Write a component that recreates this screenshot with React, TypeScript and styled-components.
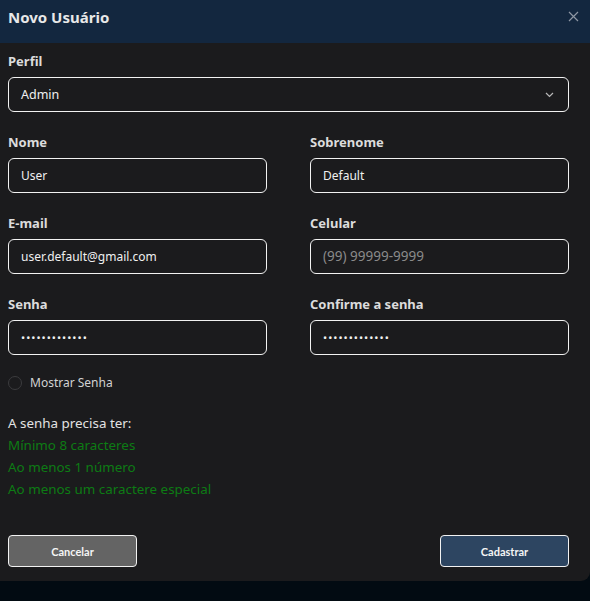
import styled, { createGlobalStyle } from 'styled-components';

const GlobalStyle = createGlobalStyle`
  * {
    box-sizing: border-box;
  }

  html, body {
    margin: 0;
    padding: 0;
    background: #020b12;
  }

  body {
    font-family: "Noto Sans", "Open Sans", sans-serif;
    color: #e6e6e6;
  }
`;

const Page = styled.div`
  width: 590px;
  height: 601px;
  overflow: hidden;
  background: #020b12;
`;

const Modal = styled.div`
  width: 590px;
  height: 581px;
  display: flex;
  flex-direction: column;
  background: #1b1b1d;
  border-bottom-right-radius: 9px;
  overflow: hidden;
`;

const Header = styled.header`
  height: 43px;
  display: flex;
  align-items: center;
  justify-content: space-between;
  padding: 0 10px 10px 8px;
  background: #13273f;
`;

const Title = styled.h2`
  margin: 0;
  font-size: 15px;
  font-weight: 700;
  color: #e8e8e8;
`;

const CloseButton = styled.button`
  display: flex;
  align-items: center;
  justify-content: center;
  width: 14px;
  height: 14px;
  padding: 0;
  border: none;
  background: transparent;
  color: #8d96a3;
  cursor: pointer;
`;

const Body = styled.div`
  flex: 1;
  display: flex;
  flex-direction: column;
  padding: 10px 21px 14px 8px;
`;

const Grid = styled.div`
  display: grid;
  grid-template-columns: 259px 259px;
  column-gap: 43px;
  row-gap: 22px;
`;

const Field = styled.div<{ $full?: boolean }>`
  display: flex;
  flex-direction: column;
  gap: 8px;
  grid-column: ${({ $full }) => ($full ? '1 / -1' : 'auto')};
`;

const Label = styled.label`
  font-size: 13px;
  font-weight: 700;
  line-height: 16px;
  color: #dcdcdc;
`;

const InputBox = styled.div`
  height: 35px;
  display: flex;
  align-items: center;
  padding: 0 12px;
  border: 1px solid #f2f2f2;
  border-radius: 6px;
  background: #1b1b1d;
`;

const Input = styled.input`
  flex: 1;
  min-width: 0;
  padding: 0;
  border: none;
  outline: none;
  background: transparent;
  font-family: inherit;
  font-size: 12px;
  color: #f0f0f0;

  &::placeholder {
    font-size: 13.5px;
    color: #8a8a8a;
  }

  &[type='password'] {
    font-size: 11px;
    letter-spacing: 1px;
  }
`;

const SelectValue = styled.span`
  flex: 1;
  font-size: 12.5px;
  color: #f0f0f0;
`;

const Chevron = styled.span`
  display: flex;
  color: #b8b8b8;
  margin-right: 2px;
`;

const CheckRow = styled.label`
  display: flex;
  align-items: center;
  gap: 8px;
  margin-top: 19px;
  font-size: 12px;
  line-height: 18px;
  color: #d2d2d2;
`;

const RoundCheck = styled.span`
  width: 14px;
  height: 14px;
  border-radius: 50%;
  border: 1px solid #3b3b3e;
`;

const Rules = styled.div`
  display: flex;
  flex-direction: column;
  margin-top: 20px;
  font-size: 13.4px;
  line-height: 22px;
`;

const RulesTitle = styled.span`
  color: #e2e2e2;
`;

const Rule = styled.span<{ $ok: boolean }>`
  color: ${({ $ok }) => ($ok ? '#0d7c14' : '#b33a3a')};
`;

const Footer = styled.div`
  margin-top: auto;
  display: flex;
  justify-content: space-between;
`;

const Button = styled.button<{ $primary?: boolean }>`
  width: 129px;
  height: 32px;
  border: 1px solid #f2f2f2;
  border-radius: 4px;
  background: ${({ $primary }) => ($primary ? '#2d4561' : '#646464')};
  font-family: "Lato", sans-serif;
  font-size: 11px;
  font-weight: 700;
  color: #f5f5f5;
  cursor: pointer;
`;

const rules = [
  { text: 'Mínimo 8 caracteres', ok: true },
  { text: 'Ao menos 1 número', ok: true },
  { text: 'Ao menos um caractere especial', ok: true },
];

export default function App() {
  return (
    <Page>
      <GlobalStyle />
      <Modal>
        <Header>
          <Title>Novo Usuário</Title>
          <CloseButton aria-label="Fechar">
            <svg width="11" height="11" viewBox="0 0 11 11" fill="none">
              <path d="M1 1L10 10M10 1L1 10" stroke="currentColor" strokeWidth="1.2" />
            </svg>
          </CloseButton>
        </Header>
        <Body>
          <Grid>
            <Field $full>
              <Label>Perfil</Label>
              <InputBox>
                <SelectValue>Admin</SelectValue>
                <Chevron>
                  <svg width="9" height="6" viewBox="0 0 9 6" fill="none">
                    <path d="M1 1L4.5 4.5L8 1" stroke="currentColor" strokeWidth="1.2" />
                  </svg>
                </Chevron>
              </InputBox>
            </Field>
            <Field>
              <Label>Nome</Label>
              <InputBox>
                <Input defaultValue="User" />
              </InputBox>
            </Field>
            <Field>
              <Label>Sobrenome</Label>
              <InputBox>
                <Input defaultValue="Default" />
              </InputBox>
            </Field>
            <Field>
              <Label>E-mail</Label>
              <InputBox>
                <Input defaultValue="user.default@gmail.com" />
              </InputBox>
            </Field>
            <Field>
              <Label>Celular</Label>
              <InputBox>
                <Input placeholder="(99) 99999-9999" />
              </InputBox>
            </Field>
            <Field>
              <Label>Senha</Label>
              <InputBox>
                <Input type="password" defaultValue="Default@12345" />
              </InputBox>
            </Field>
            <Field>
              <Label>Confirme a senha</Label>
              <InputBox>
                <Input type="password" defaultValue="Default@12345" />
              </InputBox>
            </Field>
          </Grid>
          <CheckRow>
            <RoundCheck />
            Mostrar Senha
          </CheckRow>
          <Rules>
            <RulesTitle>A senha precisa ter:</RulesTitle>
            {rules.map((rule) => (
              <Rule key={rule.text} $ok={rule.ok}>{rule.text}</Rule>
            ))}
          </Rules>
          <Footer>
            <Button>Cancelar</Button>
            <Button $primary>Cadastrar</Button>
          </Footer>
        </Body>
      </Modal>
    </Page>
  );
}
